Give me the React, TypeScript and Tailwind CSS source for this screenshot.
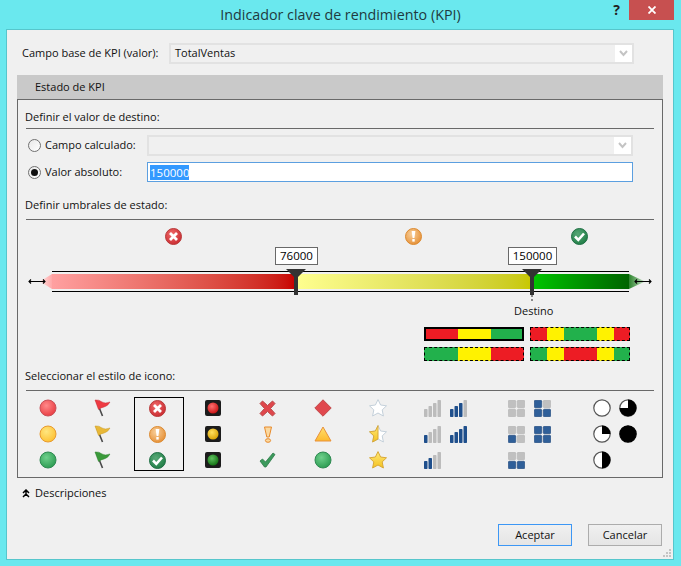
import React from "react";

function Chevron() {
  return (
    <svg width="9" height="7" viewBox="0 0 9 7">
      <path d="M1 1 L4.5 5 L8 1" fill="none" stroke="#c4c4c4" strokeWidth="2" />
    </svg>
  );
}

function Combo({ text, width }: { text?: string; width: string }) {
  return (
    <div className={`${width} h-[21px] flex border-2 border-[#e2e2e2] bg-[#f0f0f0]`}>
      <div className="flex-1 pl-[4px] leading-[15px]">{text}</div>
      <div className="w-[17px] bg-white flex items-center justify-center">
        <Chevron />
      </div>
    </div>
  );
}

function Radio({ checked }: { checked?: boolean }) {
  return (
    <div className="w-[13px] h-[13px] rounded-full border border-[#707070] bg-gradient-to-br from-[#e8e8e8] to-white flex items-center justify-center">
      {checked && <div className="w-[7px] h-[7px] rounded-full bg-[#111]" />}
    </div>
  );
}

function Defs() {
  const g = (id: string, a: string, b: string) => (
    <radialGradient id={id} cx="40%" cy="35%" r="70%">
      <stop offset="0%" stopColor={a} />
      <stop offset="100%" stopColor={b} />
    </radialGradient>
  );
  return (
    <svg width="0" height="0" className="absolute">
      <defs>
        {g("red", "#ff8a8a", "#e83a40")}
        {g("yel", "#ffe680", "#fdc030")}
        {g("grn", "#6fd08c", "#2a9a50")}
        {g("sred", "#f06a6a", "#c92a30")}
        {g("sorg", "#f8cf9a", "#e58f35")}
        {g("sgrn", "#58a877", "#1f7d45")}
        {g("lr", "#ff7070", "#c81010")}
        {g("ly", "#ffe060", "#d8a000")}
        {g("lg", "#60c060", "#107010")}
        <linearGradient id="star" x1="0" y1="0" x2="0" y2="1">
          <stop offset="0%" stopColor="#ffe97a" />
          <stop offset="100%" stopColor="#f4c21f" />
        </linearGradient>
        <linearGradient id="tri" x1="0" y1="0" x2="0" y2="1">
          <stop offset="0%" stopColor="#ffe070" />
          <stop offset="100%" stopColor="#fdb92e" />
        </linearGradient>
        <linearGradient id="tailL" x1="0" y1="0" x2="1" y2="0">
          <stop offset="0%" stopColor="#ffe0e0" />
          <stop offset="100%" stopColor="#ffa8a8" />
        </linearGradient>
        <linearGradient id="tailR" x1="0" y1="0" x2="1" y2="0">
          <stop offset="0%" stopColor="#2c842c" />
          <stop offset="100%" stopColor="#c4e0c4" />
        </linearGradient>
      </defs>
    </svg>
  );
}

function Ball({ fill, stroke }: { fill: string; stroke: string }) {
  return (
    <svg width="18" height="18" viewBox="0 0 18 18">
      <circle cx="9" cy="9" r="8" fill={`url(#${fill})`} stroke={stroke} strokeWidth="1" />
    </svg>
  );
}

function Flag({ color, dark }: { color: string; dark: string }) {
  return (
    <svg width="17" height="18" viewBox="0 0 17 18">
      <path d="M2.5 2 L8.5 17" stroke="#4a4a4a" strokeWidth="1.6" />
      <path d="M1 1 Q5 .5 8 3 Q11 5 16 3 Q14 7 10 8 Q7 8.5 4.5 10.5 Z" fill={color} stroke={dark} strokeWidth="0.5" />
    </svg>
  );
}

function Status({ kind }: { kind: "x" | "w" | "c" }) {
  const fill = kind === "x" ? "sred" : kind === "w" ? "sorg" : "sgrn";
  const stroke = kind === "x" ? "#b83a3a" : kind === "w" ? "#dc8a30" : "#1f6f44";
  return (
    <svg width="17" height="17" viewBox="0 0 17 17">
      <circle cx="8.5" cy="8.5" r="8" fill={`url(#${fill})`} stroke={stroke} />
      {kind === "x" && <path d="M5 5 L12 12 M12 5 L5 12" stroke="#fff" strokeWidth="2.8" />}
      {kind === "w" && (
        <>
          <path d="M6.6 3 H10.4 L9.4 10 H7.6 Z" fill="#fff" />
          <rect x="7.3" y="11" width="2.4" height="2.6" fill="#fff" />
        </>
      )}
      {kind === "c" && <path d="M4 8.5 L7.3 11.8 L13 5.5" fill="none" stroke="#fff" strokeWidth="2.6" />}
    </svg>
  );
}

function Light({ fill }: { fill: string }) {
  return (
    <svg width="16" height="16" viewBox="0 0 16 16">
      <rect width="16" height="16" rx="2" fill="#1c1c1c" />
      <circle cx="8" cy="8" r="5.5" fill={`url(#${fill})`} />
    </svg>
  );
}

function Cross() {
  return (
    <svg width="17" height="17" viewBox="0 0 17 17">
      <path
        d="M3.5 1 L8.5 5.5 L13.5 1 L16 3.5 L11.5 8.5 L16 13.5 L13.5 16 L8.5 11.5 L3.5 16 L1 13.5 L5.5 8.5 L1 3.5 Z"
        fill="#e0474c"
        stroke="#b84a4a"
      />
    </svg>
  );
}

function Bang() {
  return (
    <svg width="10" height="17" viewBox="0 0 10 17">
      <path d="M1.5 1 H8.5 L6.2 11 H3.8 Z" fill="#fbd9a0" stroke="#e88a2a" />
      <ellipse cx="5" cy="14.5" rx="2.6" ry="1.8" fill="#fbd9a0" stroke="#e88a2a" />
    </svg>
  );
}

function Tick() {
  return (
    <svg width="17" height="16" viewBox="0 0 17 16">
      <path d="M1 9 L3.5 7 L6.5 10 L14 1 L16 2.5 L7 15 H5.5 Z" fill="#3c9a5c" stroke="#2c7a48" strokeWidth="0.8" />
    </svg>
  );
}

function Diamond() {
  return (
    <svg width="18" height="18" viewBox="0 0 18 18">
      <path d="M9 .8 L17.2 9 L9 17.2 L.8 9 Z" fill="#e0484e" stroke="#c04a4a" strokeLinejoin="round" />
    </svg>
  );
}

function Triangle() {
  return (
    <svg width="18" height="16" viewBox="0 0 18 16">
      <path d="M9 1 L17 15 H1 Z" fill="url(#tri)" stroke="#e8913a" strokeLinejoin="round" />
    </svg>
  );
}

const starPath = "M9 .6 L11.6 6 L17.5 6.8 L13.2 10.9 L14.4 17 L9 14 L3.6 17 L4.8 10.9 L.5 6.8 L6.4 6 Z";

function Star({ mode }: { mode: "e" | "h" | "f" }) {
  return (
    <svg width="18" height="18" viewBox="0 0 18 18">
      <path d={starPath} fill={mode === "f" ? "url(#star)" : "#fff"} stroke={mode === "f" ? "#d8a838" : "#c4d0da"} />
      {mode === "h" && (
        <path d="M9 .6 L6.4 6 L.5 6.8 L4.8 10.9 L3.6 17 L9 14 Z" fill="url(#star)" stroke="#d8a838" />
      )}
    </svg>
  );
}

function Signal({ n }: { n: number }) {
  const bars = [
    [0, 10, 8],
    [4.5, 7, 11],
    [9, 4, 14],
    [13.5, 1, 17],
  ];
  return (
    <svg width="17" height="18" viewBox="0 0 17 18">
      {bars.map(([x, y, h], i) => (
        <rect
          key={i}
          x={x}
          y={y}
          width="3.5"
          height={h}
          rx="0.7"
          fill={i < n ? "#1f4f8c" : "#bcbcbc"}
        />
      ))}
    </svg>
  );
}

function Squares({ on }: { on: number[] }) {
  const pos = [
    [0.3, 0.3],
    [9.3, 0.3],
    [0.3, 9.3],
    [9.3, 9.3],
  ];
  return (
    <svg width="17" height="17" viewBox="0 0 17 17">
      {pos.map(([x, y], i) => (
        <rect
          key={i}
          x={x}
          y={y}
          width="7.4"
          height="7.4"
          rx="1"
          fill={on.includes(i) ? "#2f5f99" : "#c0c0c0"}
          stroke={on.includes(i) ? "#1f4478" : "#b2b2b2"}
          strokeWidth="0.6"
        />
      ))}
    </svg>
  );
}

function Pie({ d, full }: { d?: string; full?: boolean }) {
  return (
    <svg width="18" height="18" viewBox="0 0 18 18">
      <circle cx="9" cy="9" r="8.2" fill={full ? "#000" : "#fff"} stroke={full ? "#000" : "#555"} strokeWidth="1.2" />
      {d && <path d={d} fill="#000" />}
    </svg>
  );
}

function Cols() {
  const Pair = ({ a, b }: { a: React.ReactNode; b?: React.ReactNode }) => (
    <div className="flex">
      <div className="w-[26px] flex justify-center">{a}</div>
      <div className="w-[26px] flex justify-center">{b}</div>
    </div>
  );
  const columns: { w: string; cells: React.ReactNode[]; selected?: boolean }[] = [
    { w: "w-[55px]", cells: [<Ball fill="red" stroke="#c85058" />, <Ball fill="yel" stroke="#e89a30" />, <Ball fill="grn" stroke="#2f8a52" />] },
    { w: "w-[55px]", cells: [<Flag color="#ee3a42" dark="#c83038" />, <Flag color="#e8b838" dark="#c89820" />, <Flag color="#3a9a3a" dark="#2a802a" />] },
    { w: "w-[55px]", selected: true, cells: [<Status kind="x" />, <Status kind="w" />, <Status kind="c" />] },
    { w: "w-[55px]", cells: [<Light fill="lr" />, <Light fill="ly" />, <Light fill="lg" />] },
    { w: "w-[55px]", cells: [<Cross />, <Bang />, <Tick />] },
    { w: "w-[55px]", cells: [<Diamond />, <Triangle />, <Ball fill="grn" stroke="#2f8a52" />] },
    { w: "w-[55px]", cells: [<Star mode="e" />, <Star mode="h" />, <Star mode="f" />] },
    { w: "w-[80px]", cells: [<Pair a={<Signal n={0} />} b={<Signal n={3} />} />, <Pair a={<Signal n={1} />} b={<Signal n={4} />} />, <Pair a={<Signal n={2} />} />] },
    { w: "w-[88px]", cells: [<Pair a={<Squares on={[]} />} b={<Squares on={[0, 2, 3]} />} />, <Pair a={<Squares on={[2]} />} b={<Squares on={[0, 1, 2, 3]} />} />, <Pair a={<Squares on={[2, 3]} />} />] },
    {
      w: "w-[83px]",
      cells: [
        <Pair a={<Pie />} b={<Pie d="M9 9 V.5 A8.5 8.5 0 1 1 .5 9 Z" />} />,
        <Pair a={<Pie d="M9 9 V.5 A8.5 8.5 0 0 1 17.5 9 Z" />} b={<Pie full />} />,
        <Pair a={<Pie d="M9 .5 A8.5 8.5 0 0 1 9 17.5 Z" />} />,
      ],
    },
  ];
  return (
    <div className="flex ml-[2px] mt-[4px]">
      {columns.map((c, i) => (
        <div key={i} className={`${c.w} relative flex flex-col`}>
          {c.selected && <div className="absolute left-[4px] top-[2px] w-[50px] h-[74px] border border-black" />}
          {c.cells.map((cell, j) => (
            <div key={j} className="h-[26px] flex items-center justify-center">
              {cell}
            </div>
          ))}
        </div>
      ))}
    </div>
  );
}

function MiniBar({ segs, selected }: { segs: [string, number][]; selected?: boolean }) {
  return (
    <div className={`relative w-[100px] h-[14px] flex ${selected ? "border-2 border-black" : ""}`}>
      {segs.map(([c, f], i) => (
        <div key={i} className={c} style={{ flexGrow: f, flexBasis: 0 }} />
      ))}
      {!selected && <div className="absolute inset-0 border border-dashed border-black" />}
    </div>
  );
}

function Heading({ children }: { children: React.ReactNode }) {
  return <div className="h-[18px] ml-[7px] flex items-center">{children}</div>;
}

function Line() {
  return <div className="h-px w-[628px] ml-[8px] bg-[#696969]" />;
}

function Thumb({ left, dashed }: { left: string; dashed?: boolean }) {
  return (
    <svg className={`absolute ${left} top-[-3px]`} width="20" height="34" viewBox="0 0 20 34">
      <path d="M0 0 H20 L12 8 V26 H8 V8 Z" fill="#333" />
      {dashed && <path d="M10 26 V33" stroke="#222" strokeDasharray="2 2" />}
    </svg>
  );
}

function ValueBox({ left, width, children }: { left: string; width: string; children: React.ReactNode }) {
  return (
    <div className={`absolute ${left} ${width} top-[-25px] h-[18px] border border-[#696969] bg-white flex items-center justify-center text-black text-[11.5px]`}>
      {children}
    </div>
  );
}

const R = "bg-[#ed1c24]";
const Y = "bg-[#fff200]";
const G = "bg-[#22b14c]";

export default function App() {
  return (
    <div className="w-[681px] h-[566px] bg-[#6ae8ee] flex flex-col overflow-hidden font-['Open_Sans',sans-serif] text-[11px] text-[#111]">
      <Defs />
      <div className="h-[29px] grid grid-cols-[1fr_auto_1fr]">
        <div />
        <div className="text-[14.3px] leading-[29px] text-[#1f3a40]">Indicador clave de rendimiento (KPI)</div>
        <div className="flex justify-end items-start pr-[7px]">
          <div className="font-bold text-[14px] leading-[20px] text-[#222] mr-[9px]">?</div>
          <div className="w-[45px] h-[20px] bg-[#c75050] flex items-center justify-center">
            <svg width="8" height="8" viewBox="0 0 8 8">
              <path d="M.5 .5 L7.5 7.5 M7.5 .5 L.5 7.5" stroke="#fff" strokeWidth="1.8" />
            </svg>
          </div>
        </div>
      </div>

      <div className="flex-1 mx-[7px] mb-[6px] ml-[6px] border border-[#56c6cc] bg-[#f0f0f0] flex flex-col relative">
        <div className="flex items-center mt-[13px] ml-[15px]">
          <div className="w-[147px]">Campo base de KPI (valor):</div>
          <Combo text="TotalVentas" width="w-[465px]" />
        </div>

        <div className="mt-[11px] ml-[10px] w-[646px] h-[24px] bg-[#c9c9c9] pl-[18px] leading-[24px]">Estado de KPI</div>
        <div className="ml-[10px] w-[646px] h-[379px] border border-[#696969]">
          <div className="h-[8px]" />
          <Heading>Definir el valor de destino:</Heading>
          <div className="h-[2px]" />
          <Line />

          <div className="flex items-center mt-[6px] ml-[10px] h-[21px]">
            <Radio />
            <div className="w-[106px] pl-[4px]">Campo calculado:</div>
            <Combo width="w-[486px]" />
          </div>
          <div className="flex items-center mt-[6px] ml-[10px] h-[20px]">
            <Radio checked />
            <div className="w-[106px] pl-[4px]">Valor absoluto:</div>
            <div className="w-[486px] h-[20px] border border-[#5b9fe0] bg-white pl-[2px] flex items-center">
              <span className="bg-[#3399ff] text-white leading-[15px] text-[11.5px]">150000</span>
            </div>
          </div>

          <div className="h-[14px]" />
          <Heading>Definir umbrales de estado:</Heading>
          <div className="h-[5px]" />
          <Line />

          <div className="flex mt-[8px] h-[17px]">
            <div className="ml-[147px]"><Status kind="x" /></div>
            <div className="ml-[223px]"><Status kind="w" /></div>
            <div className="ml-[149px]"><Status kind="c" /></div>
          </div>

          <div className="flex mt-[26px] h-[21px] ml-[10px] items-center">
            <div className="w-[24px] h-[21px] relative">
              <svg width="24" height="21" viewBox="0 0 24 21" className="block">
                <path d="M12 10.5 L24 3 V18 Z" fill="url(#tailL)" />
                <path d="M1 10.5 H17 M3 8.5 L1 10.5 L3 12.5 M15 8.5 L17 10.5 L15 12.5" fill="none" stroke="#000" strokeWidth="1.1" />
              </svg>
            </div>
            <div className="w-[577px] h-[21px] border-y border-black py-[2px] flex relative">
              <div className="w-[242px] h-[15px] bg-gradient-to-r from-[#ffa0a0] to-[#c80000]" />
              <div className="w-[236px] h-[15px] bg-gradient-to-r from-[#ffff90] to-[#c8c800]" />
              <div className="w-[99px] h-[15px] bg-gradient-to-r from-[#00c800] to-[#006400]" />
              <ValueBox left="left-[223px]" width="w-[43px]">76000</ValueBox>
              <ValueBox left="left-[456px]" width="w-[49px]">150000</ValueBox>
              <Thumb left="left-[234px]" />
              <Thumb left="left-[470px]" dashed />
            </div>
            <div className="w-[23px] h-[21px]">
              <svg width="23" height="21" viewBox="0 0 23 21" className="block">
                <path d="M16 10.5 L0 3 V18 Z" fill="url(#tailR)" />
                <path d="M6 10.5 H22 M8 8.5 L6 10.5 L8 12.5 M20 8.5 L22 10.5 L20 12.5" fill="none" stroke="#000" strokeWidth="1.1" />
              </svg>
            </div>
          </div>

          <div className="mt-[11px] h-[16px] ml-[496px] leading-[16px]">Destino</div>

          <div className="mt-[8px] ml-[406px] grid grid-cols-[100px_100px] gap-x-[6px] gap-y-[6px]">
            <MiniBar selected segs={[[R, 32], [Y, 33], [G, 31]]} />
            <MiniBar segs={[[R, 17], [Y, 17], [G, 33], [Y, 17], [R, 16]]} />
            <MiniBar segs={[[G, 34], [Y, 33], [R, 33]]} />
            <MiniBar segs={[[G, 17], [Y, 17], [R, 33], [Y, 17], [G, 16]]} />
          </div>

          <div className="h-[6px]" />
          <Heading>Seleccionar el estilo de icono:</Heading>
          <div className="h-[5px]" />
          <Line />
          <Cols />
        </div>

        <div className="flex items-center mt-[6px] ml-[15px] h-[18px]">
          <svg width="8" height="9" viewBox="0 0 8 9" className="mr-[5px]">
            <path d="M1 4 L4 1 L7 4 M1 8 L4 5 L7 8 M4 1 V5" fill="none" stroke="#000" strokeWidth="1.5" />
          </svg>
          <span>Descripciones</span>
        </div>

        <div className="flex justify-end mt-[22px] mr-[11px] gap-[16px]">
          <div className="w-[74px] h-[22px] border border-[#3c97f5] bg-gradient-to-b from-[#f0f0f0] to-[#e5e5e5] flex items-center justify-center">Aceptar</div>
          <div className="w-[74px] h-[22px] border border-[#acacac] bg-gradient-to-b from-[#f0f0f0] to-[#e5e5e5] flex items-center justify-center">Cancelar</div>
        </div>

        <svg className="absolute right-[2px] bottom-[2px]" width="8" height="8" viewBox="0 0 8 8">
          <path d="M6 0h2v2H6zM3 3h2v2H3zM6 3h2v2H6zM0 6h2v2H0zM3 6h2v2H3zM6 6h2v2H6z" fill="#c4c4c4" />
        </svg>
      </div>
    </div>
  );
}
